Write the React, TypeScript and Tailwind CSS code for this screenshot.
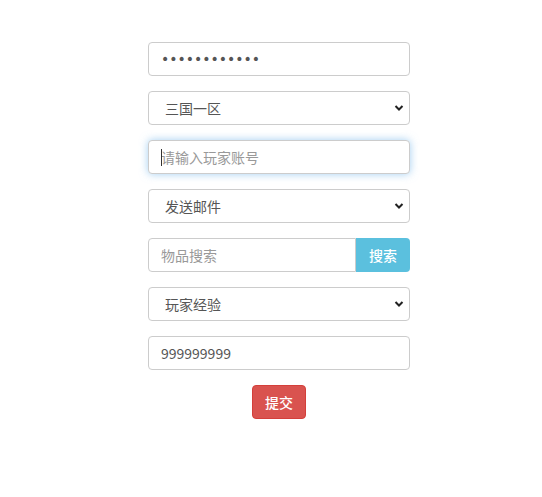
import React from "react";

const font = { fontFamily: '"Noto Sans CJK SC", "Noto Sans", sans-serif' };

const inputCls =
  "block w-full h-[34px] px-3 text-[14px] text-[#555] bg-white border border-[#ccc] rounded-[4px] outline-none placeholder:text-[#999]";

function Chevron() {
  return (
    <svg
      className="pointer-events-none absolute right-[6px] top-[13px]"
      width="10"
      height="8"
      viewBox="0 0 10 8"
    >
      <path d="M1.5 2 L5 5.5 L8.5 2" fill="none" stroke="#222" strokeWidth="2" />
    </svg>
  );
}

function Select({ options }: { options: string[] }) {
  return (
    <div className="relative">
      <select
        className={inputCls + " appearance-none pl-4 text-[#444]"}
        defaultValue={options[0]}
      >
        {options.map((o) => (
          <option key={o}>{o}</option>
        ))}
      </select>
      <Chevron />
    </div>
  );
}

export default function App() {
  return (
    <div className="flex min-h-[497px] justify-center bg-white pl-4 pt-[42px]" style={font}>
      <form className="flex w-[262px] flex-col gap-[15px]">
        <input
          type="password"
          className={inputCls + " text-[#333]"}
          style={{ fontFamily: '"DejaVu Sans", sans-serif' }}
          defaultValue="111111111111"
        />
        <Select options={["三国一区", "三国二区"]} />
        <div className="relative">
          <input
            className={inputCls + " border-[#66afe9] shadow-[0_0_8px_rgba(102,175,233,0.6)]"}
            placeholder="请输入玩家账号"
          />
          <span className="absolute left-[13px] top-[9px] h-[17px] w-px bg-[#333]" />
        </div>
        <Select options={["发送邮件", "玩家经验"]} />
        <div className="flex">
          <input
            className={inputCls + " flex-1 rounded-r-none"}
            placeholder="物品搜索"
          />
          <button
            type="button"
            className="h-[34px] w-[54px] shrink-0 rounded-r-[4px] bg-[#5bc0de] text-[14px] font-medium text-white"
          >
            搜索
          </button>
        </div>
        <Select options={["玩家经验", "发送邮件"]} />
        <input className={inputCls} defaultValue="999999999" />
        <div className="flex justify-center">
          <button
            type="button"
            className="h-[34px] w-[54px] rounded-[4px] border border-[#d43f3a] bg-[#d9534f] text-[14px] font-medium text-white"
          >
            提交
          </button>
        </div>
      </form>
    </div>
  );
}
